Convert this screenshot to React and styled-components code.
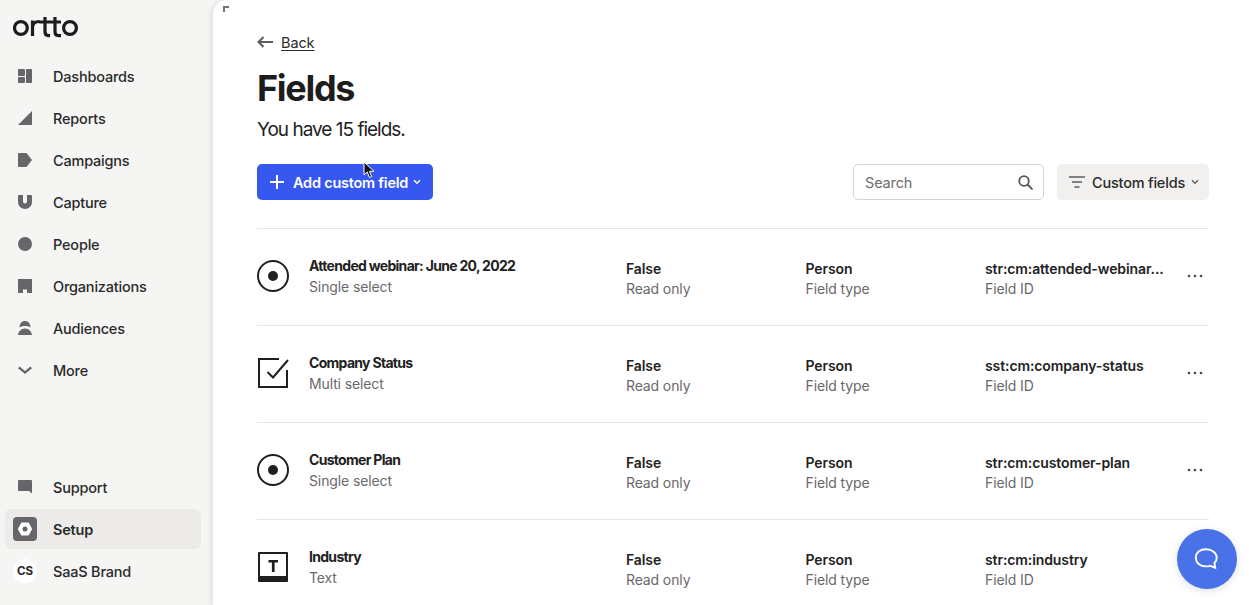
import React from "react";
import styled, { createGlobalStyle } from "styled-components";

const GlobalStyle = createGlobalStyle`
  html, body {
    margin: 0;
    padding: 0;
    height: 100%;
    overflow: hidden;
    background: #f5f5f4;
    font-family: Inter, "Liberation Sans", sans-serif;
    color: #1f1f1f;
  }
  * { box-sizing: border-box; }
`;

const GREY = "#67656a";

const NavIcons = {
  dashboards: (
    <>
      <rect x="0" y="0" width="7" height="7" rx="1" />
      <rect x="0" y="8" width="7" height="6" rx="1" />
      <rect x="8" y="0" width="6" height="14" rx="1" />
    </>
  ),
  reports: <path d="M0 14 14 0v14z" />,
  campaigns: <path d="M1 0h7.5L14 7l-5.5 7H1a1 1 0 0 1-1-1V1a1 1 0 0 1 1-1z" />,
  capture: <path d="M1 0h4v6.5a2 2 0 0 0 4 0V0h4a1 1 0 0 1 1 1v6A7 7 0 0 1 0 7V1a1 1 0 0 1 1-1z" />,
  people: <circle cx="7" cy="7" r="7" />,
  organizations: <path d="M0 0h14v14H9v-3.500H5V14H0z" />,
  audiences: <path d="M1.500 6.500C1.500 2.500 3.800 0 7 0s5.500 2.500 5.500 6.500C10.800 5.400 9 5 7 5s-3.800.4-5.500 1.500zM0 14c.5-3.500 3-6.500 7-6.500s6.500 3 7 6.500z" />,
  more: <path d="M1.500 3.500 7 8l5.500-4.500L14 5.300 7 11 0 5.300z" />,
  support: <path d="M1 0h12a1 1 0 0 1 1 1v12.500L11 11H1a1 1 0 0 1-1-1V1a1 1 0 0 1 1-1z" />,
};

const navTop = [
  ["dashboards", "Dashboards"],
  ["reports", "Reports"],
  ["campaigns", "Campaigns"],
  ["capture", "Capture"],
  ["people", "People"],
  ["organizations", "Organizations"],
  ["audiences", "Audiences"],
  ["more", "More"],
];

const fields = [
  { icon: "radio", name: "Attended webinar: June 20, 2022", type: "Single select", id: "str:cm:attended-webinar..." },
  { icon: "check", name: "Company Status", type: "Multi select", id: "sst:cm:company-status" },
  { icon: "radio", name: "Customer Plan", type: "Single select", id: "str:cm:customer-plan" },
  { icon: "text", name: "Industry", type: "Text", id: "str:cm:industry" },
];

const Page = styled.div`
  display: flex;
  width: 100%;
  height: 605px;
  overflow: hidden;
`;

const Sidebar = styled.aside`
  flex: 0 0 213px;
  display: flex;
  flex-direction: column;
  padding: 13px 12px 14px 5px;
  background: #f5f5f4;
`;

const Logo = styled.svg`
  display: block;
  width: 66px;
  height: 27px;
  margin: 0 0 16px 8px;
  fill: none;
  stroke: #1c1c1c;
  stroke-width: 3.2;
`;

const NavList = styled.nav`
  display: flex;
  flex-direction: column;
  gap: 2px;
`;

const BottomNav = styled(NavList)`
  margin-top: auto;
`;

const NavItem = styled.a`
  display: flex;
  align-items: center;
  height: 40px;
  padding-left: 13px;
  border-radius: 6px;
  font-size: 14.5px;
  letter-spacing: -0.2px;
  font-weight: ${(p) => (p.$active ? 600 : 500)};
  color: #2a2a2a;
  background: ${(p) => (p.$active ? "#ecebe9" : "transparent")};
`;

const NavGlyph = styled.svg`
  flex: none;
  width: 14px;
  height: 14px;
  margin-right: 21px;
  fill: ${GREY};
`;

const SetupBadge = styled.span`
  flex: none;
  display: flex;
  align-items: center;
  justify-content: center;
  width: 24px;
  height: 24px;
  margin: 0 16px 0 -5px;
  border-radius: 4px;
  background: ${GREY};
`;

const Avatar = styled.span`
  flex: none;
  display: flex;
  align-items: center;
  justify-content: center;
  width: 24px;
  height: 24px;
  margin: 0 16px 0 -5px;
  border-radius: 50%;
  background: #fff;
  font-size: 11.5px;
  letter-spacing: 0;
  font-weight: 700;
  color: #222;
`;

const Main = styled.main`
  position: relative;
  flex: 1;
  min-width: 0;
  padding: 33px 40px 0 44px;
  background: #fff;
  border-top-left-radius: 14px;
  box-shadow: -2px 0 5px rgba(0, 0, 0, 0.09);
`;

const CornerMark = styled.span`
  position: absolute;
  top: 6px;
  left: 10px;
  width: 6px;
  height: 6px;
  border-top: 2px solid #77757a;
  border-left: 2px solid #77757a;
`;

const Cursor = styled.svg`
  position: absolute;
  top: 161px;
  left: 150px;
  width: 12px;
  height: 18px;
`;

const BackLink = styled.a`
  display: flex;
  align-items: center;
  gap: 8px;
  height: 18px;
  font-size: 14.5px;
  letter-spacing: -0.1px;
  color: #2a2a2a;

  span {
    text-decoration: underline;
    text-underline-offset: 2px;
  }
`;

const Title = styled.h1`
  margin: 15px 0 0;
  font-size: 36px;
  line-height: 44px;
  font-weight: 700;
  letter-spacing: -1.3px;
  color: #1d1d1d;
`;

const Subtitle = styled.p`
  margin: 8px 0 0;
  font-size: 19px;
  line-height: 24px;
  letter-spacing: -1px;
  color: #222;
`;

const Toolbar = styled.div`
  display: flex;
  align-items: center;
  justify-content: space-between;
  margin-top: 22px;
  padding-bottom: 28px;
  border-bottom: 1px solid #e7e6e4;
`;

const ToolGroup = styled.div`
  display: flex;
  align-items: center;
  gap: 13px;
`;

const PrimaryButton = styled.button`
  display: flex;
  align-items: center;
  width: 175.5px;
  height: 36px;
  padding: 0 0 0 13px;
  border: 0;
  border-radius: 5px;
  background: #3758f0;
  color: #fff;
  font: 600 14.5px Inter, "Liberation Sans", sans-serif;
  letter-spacing: -0.23px;

  svg:first-child {
    margin-right: 9px;
  }
  svg:last-child {
    margin-left: 5px;
  }
`;

const SearchBox = styled.label`
  display: flex;
  align-items: center;
  justify-content: space-between;
  width: 191px;
  height: 36px;
  padding: 0 10px 0 11px;
  border: 1px solid #d5d3cf;
  border-radius: 5px;
  font-size: 14.5px;
  letter-spacing: -0.15px;
  color: #6f6d70;
`;

const FilterButton = styled.button`
  display: flex;
  align-items: center;
  width: 152px;
  height: 36px;
  padding: 0 0 0 12px;
  border: 0;
  border-radius: 5px;
  background: #f1f0ee;
  color: #2a2a2a;
  font: 500 14.5px Inter, "Liberation Sans", sans-serif;
  letter-spacing: -0.2px;

  svg:first-child {
    margin-right: 7px;
  }
  svg:last-child {
    margin-left: 6px;
  }
`;

const Row = styled.div`
  display: grid;
  grid-template-columns: 52px 317px 179.5px 179.5px 1fr 22px;
  align-items: center;
  height: 97px;
  border-bottom: 1px solid #e7e6e4;
`;

const IconSlot = styled.div`
  display: flex;
  margin-top: -2px;
`;

const Cell = styled.div`
  display: flex;
  flex-direction: column;
  gap: 2px;
  margin-top: 4px;
  min-width: 0;
`;

const NameCell = styled(Cell)`
  gap: 3px;
  margin-top: -1px;
`;

const Strong = styled.div`
  font-size: 14px;
  line-height: 18px;
  font-weight: 600;
  letter-spacing: -0.1px;
  white-space: nowrap;
  color: #222;
`;

const Name = styled(Strong)`
  font-weight: 700;
  letter-spacing: -0.7px;
`;

const Muted = styled.div`
  font-size: 14px;
  line-height: 18px;
  letter-spacing: -0.12px;
  white-space: nowrap;
  color: #6a686b;
`;

const Dots = styled.svg`
  width: 16px;
  height: 4px;
  margin-top: -2px;
  justify-self: start;
`;

const ChatBubble = styled.button`
  position: absolute;
  right: 12px;
  bottom: 16px;
  display: flex;
  align-items: center;
  justify-content: center;
  width: 60px;
  height: 60px;
  border: 0;
  border-radius: 50%;
  background: #4a72e8;
  box-shadow: 0 2px 8px rgba(0, 0, 0, 0.12);
`;

const Chevron = ({ color }) => (
  <svg width="8" height="6" viewBox="0 0 8 6" fill="none" stroke={color} strokeWidth="1.4">
    <path d="M1 1.200 4 4.200l3-3" />
  </svg>
);

const FieldIcon = ({ kind }) => {
  if (kind === "radio") {
    return (
      <svg width="32" height="32" viewBox="0 0 32 32" fill="none" stroke="#1f1f1f" strokeWidth="2">
        <circle cx="16" cy="16" r="15" />
        <circle cx="16" cy="16" r="5" fill="#1f1f1f" stroke="none" />
      </svg>
    );
  }
  if (kind === "check") {
    return (
      <svg width="32" height="32" viewBox="0 0 32 32" fill="none" stroke="#1f1f1f" strokeWidth="2">
        <path d="M22 2H2v28h28V13" />
        <path d="M10.500 15 16 20.500 31 3" />
      </svg>
    );
  }
  return (
    <svg width="32" height="32" viewBox="0 0 32 32" fill="#1f1f1f">
      <path d="M2 1h28a1 1 0 0 1 1 1v28a1 1 0 0 1-1 1H2a1 1 0 0 1-1-1V2a1 1 0 0 1 1-1zm1 2v22h26V3z" />
      <path d="M11.500 9h9.500v2.400h-3.400V21h-2.700v-9.600h-3.400z" />
    </svg>
  );
};

const SideLink = ({ icon, label }) => (
  <NavItem>
    <NavGlyph viewBox="0 0 14 14">{NavIcons[icon]}</NavGlyph>
    {label}
  </NavItem>
);

export default function App() {
  return (
    <>
      <GlobalStyle />
      <Page>
        <Sidebar>
          <Logo viewBox="0 0 66 27" role="img" aria-label="ortto">
            <circle cx="7.900" cy="15" r="6.400" />
            <path d="M19.500 7.500V23M19.500 14.500c0-4 2.500-6 7-6" />
            <path d="M32 4v15c0 2.500 1.200 3.600 3.600 3.600H37M26 9h22" />
            <path d="M42 4v15c0 2.500 1.200 3.600 3.600 3.600H48" />
            <circle cx="57" cy="15" r="6.400" />
          </Logo>
          <NavList>
            {navTop.map(([icon, label]) => (
              <SideLink key={icon} icon={icon} label={label} />
            ))}
          </NavList>
          <BottomNav>
            <SideLink icon="support" label="Support" />
            <NavItem $active>
              <SetupBadge>
                <svg width="16" height="16" viewBox="0 0 16 16">
                  <path d="M4.400 1.500h7.200L15.200 8l-3.600 6.500H4.400L.8 8z" fill="#fff" />
                  <circle cx="8" cy="8" r="2.500" fill={GREY} />
                </svg>
              </SetupBadge>
              Setup
            </NavItem>
            <NavItem>
              <Avatar>CS</Avatar>
              SaaS Brand
            </NavItem>
          </BottomNav>
        </Sidebar>

        <Main>
          <CornerMark />
          <BackLink>
            <svg width="16" height="12" viewBox="0 0 16 12" fill="none" stroke="#5f5d60" strokeWidth="2">
              <path d="M16 6H1.500M6.500 1 1.500 6l5 5" />
            </svg>
            <span>Back</span>
          </BackLink>
          <Title>Fields</Title>
          <Subtitle>You have 15 fields.</Subtitle>
          <Toolbar>
            <PrimaryButton>
              <svg width="14" height="14" viewBox="0 0 14 14" stroke="#fff" strokeWidth="2">
                <path d="M7 0v14M0 7h14" />
              </svg>
              Add custom field
              <Chevron color="#fff" />
            </PrimaryButton>
            <ToolGroup>
              <SearchBox>
                Search
                <svg width="15" height="15" viewBox="0 0 15 15" fill="none" stroke="#555" strokeWidth="1.800">
                  <circle cx="6" cy="6" r="4.800" />
                  <path d="m9.500 9.500 5 5" />
                </svg>
              </SearchBox>
              <FilterButton>
                <svg width="16" height="12" viewBox="0 0 16 12" stroke="#5f5d60" strokeWidth="1.600">
                  <path d="M0 1h16M3 6h10M5.500 11h5" />
                </svg>
                Custom fields
                <Chevron color="#5f5d60" />
              </FilterButton>
            </ToolGroup>
          </Toolbar>

          {fields.map((field) => (
            <Row key={field.id}>
              <IconSlot>
                <FieldIcon kind={field.icon} />
              </IconSlot>
              <NameCell>
                <Name>{field.name}</Name>
                <Muted>{field.type}</Muted>
              </NameCell>
              <Cell>
                <Strong>False</Strong>
                <Muted>Read only</Muted>
              </Cell>
              <Cell>
                <Strong>Person</Strong>
                <Muted>Field type</Muted>
              </Cell>
              <Cell>
                <Strong>{field.id}</Strong>
                <Muted>Field ID</Muted>
              </Cell>
              <Dots viewBox="0 0 16 4" fill="#4a484b">
                <circle cx="2" cy="2" r="1.300" />
                <circle cx="8" cy="2" r="1.300" />
                <circle cx="14" cy="2" r="1.300" />
              </Dots>
            </Row>
          ))}

          <Cursor viewBox="0 0 12 18">
            <path d="M1 1v13l3.200-3 2.300 5.500 2.200-1-2.300-5.200H11z" fill="#111" stroke="#fff" strokeWidth="1" />
          </Cursor>
          <ChatBubble>
            <svg width="26" height="25" viewBox="0 0 28 26" fill="none" stroke="#fff" strokeWidth="2">
              <path d="M13 2c6.500 0 11.500 3.800 11.500 9 0 2.500-1 4.500-2.500 6l.8 5-5.300-2.200c-1.400.4-2.900.6-4.500.6C6.500 20.400 2 16.500 2 11S6.500 2 13 2z" />
            </svg>
          </ChatBubble>
        </Main>
      </Page>
    </>
  );
}
